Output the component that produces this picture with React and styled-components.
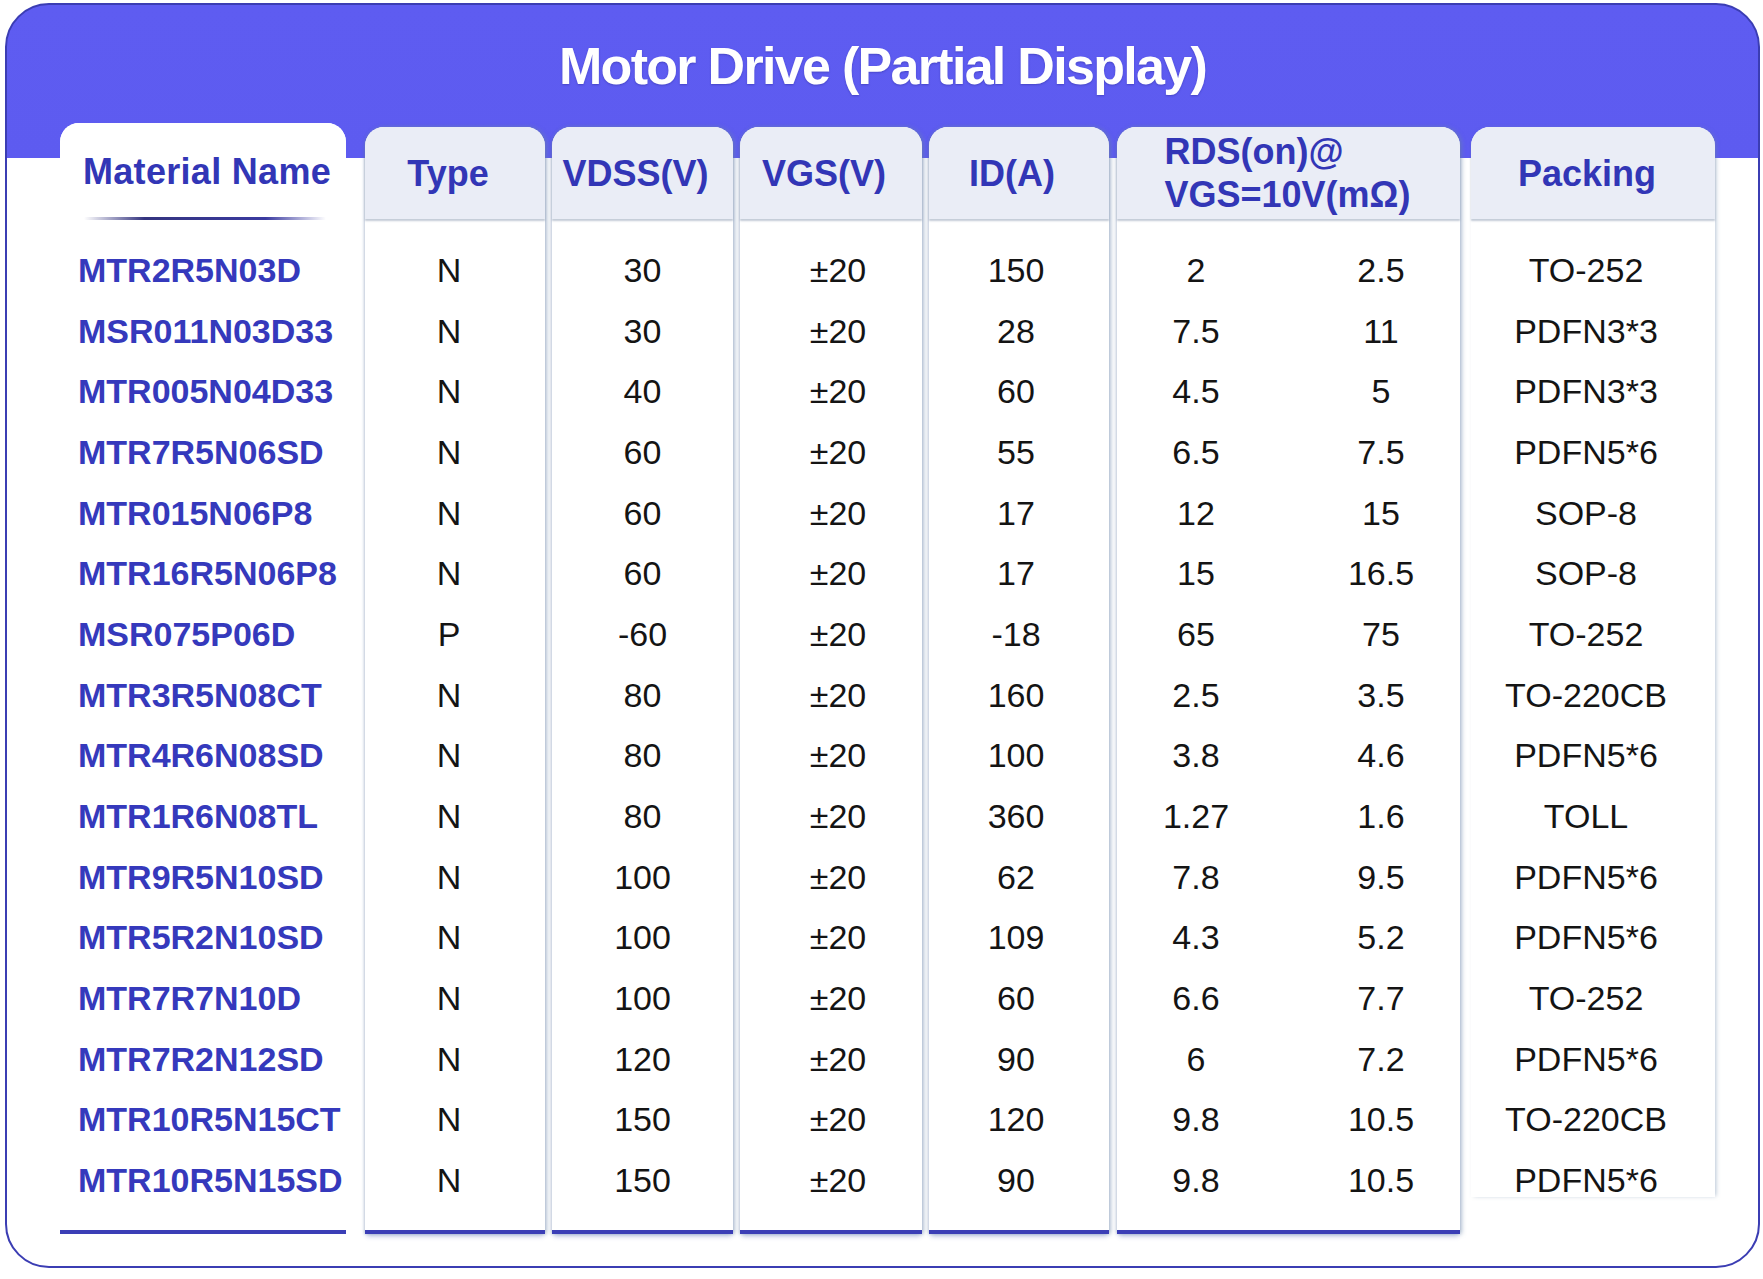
import React from 'react';
import styled, { createGlobalStyle } from 'styled-components';

const GlobalStyle = createGlobalStyle`
  html, body {
    margin: 0;
    padding: 0;
    background: #ffffff;
  }
  body {
    font-family: "Liberation Sans", Arial, sans-serif;
    -webkit-font-smoothing: antialiased;
  }
`;

const Card = styled.section`
  box-sizing: border-box;
  width: 1755px;
  height: 1265px;
  margin: 3px 0 0 5px;
  border: 2px solid #3b3db3;
  border-radius: 44px;
  overflow: hidden;
  background: linear-gradient(180deg, #5e5cf1 0, #5d5bf0 153px, #ffffff 153px);
  display: flex;
  flex-direction: column;
`;

const Title = styled.h1`
  margin: 0;
  height: 118px;
  padding-top: 4px;
  box-sizing: border-box;
  display: flex;
  align-items: center;
  justify-content: center;
  color: #ffffff;
  font-size: 52px;
  line-height: 1;
  font-weight: 700;
  letter-spacing: -1.7px;
  text-shadow: 0 1px 2px rgba(30, 30, 120, 0.35);
`;

const Columns = styled.div`
  display: flex;
  align-items: flex-start;
  padding-left: 53px;
`;

const sideShadow = '2px 0 4px rgba(110, 138, 170, 0.5), -1px 0 3px rgba(110, 138, 170, 0.32)';

const Column = styled.div`
  width: ${p => p.width}px;
  height: ${p => (p.open ? '1070px' : 'auto')};
  margin-left: ${p => p.offset}px;
  margin-top: ${p => (p.lead ? 0 : 4)}px;
  display: flex;
  flex-direction: column;
  background: #ffffff;
  border-radius: 19px 19px 0 0;
  border-bottom: ${p => (p.open ? 'none' : '4px solid #3b3eb6')};
  box-shadow: ${p =>
    p.lead
      ? 'none'
      : p.open
      ? '2px 0 4px -1px rgba(110, 138, 170, 0.5)'
      : `${sideShadow}, 0 5px 5px -2px rgba(70, 80, 190, 0.22)`};
`;

const Head = styled.div`
  position: relative;
  z-index: 1;
  flex: none;
  height: ${p => (p.lead ? 96 : 92)}px;
  box-sizing: border-box;
  display: flex;
  align-items: center;
  justify-content: ${p => (p.lead ? 'flex-start' : 'center')};
  padding: ${p => (p.lead ? '0 0 0 23px' : `0 ${p.pad}px 0 0`)};
  border-radius: 19px 19px 0 0;
  background: ${p => (p.lead ? '#ffffff' : '#eaedf6')};
  box-shadow: ${p => (p.lead ? 'none' : '0 2px 2px rgba(105, 125, 155, 0.4)')};
  color: #3236b6;
  font-size: 36px;
  font-weight: 700;
  line-height: 43px;
  letter-spacing: ${p => (p.lead ? 0.3 : 0)}px;
  text-align: left;

  ${p =>
    p.lead &&
    `&::after {
      content: '';
      position: absolute;
      left: 24px;
      right: 20px;
      bottom: -1px;
      height: 3px;
      border-radius: 2px;
      background: linear-gradient(90deg, rgba(40, 40, 120, 0), #34347f 25%, #3a3aa0 75%, rgba(40, 40, 140, 0));
    }`}
`;

const Body = styled.div`
  padding: 21px 0 ${p => (p.open ? 0 : 19)}px;
`;

const Cell = styled.div`
  height: 60.7px;
  box-sizing: border-box;
  display: grid;
  grid-template-columns: ${p => (p.split ? '1fr 1fr' : '1fr')};
  column-gap: 27px;
  align-items: center;
  justify-items: ${p => (p.lead ? 'start' : 'center')};
  padding-left: ${p => (p.lead ? 18 : Math.max(p.shift, 0) * 2)}px;
  padding-right: ${p => Math.max(-p.shift, 0) * 2}px;
  font-size: 34px;
  font-weight: ${p => (p.lead ? 700 : 400)};
  color: ${p => (p.lead ? '#3539bc' : '#141414')};
`;

const columns = [
  { title: 'Material Name', width: 286, offset: 0, shift: 0, pad: 0, lead: true },
  { title: 'Type', width: 180, offset: 19, shift: -6, pad: 14 },
  { title: 'VDSS(V)', width: 181, offset: 7, shift: 0, pad: 14 },
  { title: 'VGS(V)', width: 182, offset: 7, shift: 7, pad: 14 },
  { title: 'ID(A)', width: 180, offset: 7, shift: -3, pad: 14 },
  { title: ['RDS(on)@', 'VGS=10V(mΩ)'], width: 343, offset: 8, shift: 0, pad: 2, split: true },
  { title: 'Packing', width: 244, offset: 11, shift: -7, pad: 12, open: true },
];

const rows = [
  ['MTR2R5N03D', 'N', '30', '±20', '150', ['2', '2.5'], 'TO-252'],
  ['MSR011N03D33', 'N', '30', '±20', '28', ['7.5', '11'], 'PDFN3*3'],
  ['MTR005N04D33', 'N', '40', '±20', '60', ['4.5', '5'], 'PDFN3*3'],
  ['MTR7R5N06SD', 'N', '60', '±20', '55', ['6.5', '7.5'], 'PDFN5*6'],
  ['MTR015N06P8', 'N', '60', '±20', '17', ['12', '15'], 'SOP-8'],
  ['MTR16R5N06P8', 'N', '60', '±20', '17', ['15', '16.5'], 'SOP-8'],
  ['MSR075P06D', 'P', '-60', '±20', '-18', ['65', '75'], 'TO-252'],
  ['MTR3R5N08CT', 'N', '80', '±20', '160', ['2.5', '3.5'], 'TO-220CB'],
  ['MTR4R6N08SD', 'N', '80', '±20', '100', ['3.8', '4.6'], 'PDFN5*6'],
  ['MTR1R6N08TL', 'N', '80', '±20', '360', ['1.27', '1.6'], 'TOLL'],
  ['MTR9R5N10SD', 'N', '100', '±20', '62', ['7.8', '9.5'], 'PDFN5*6'],
  ['MTR5R2N10SD', 'N', '100', '±20', '109', ['4.3', '5.2'], 'PDFN5*6'],
  ['MTR7R7N10D', 'N', '100', '±20', '60', ['6.6', '7.7'], 'TO-252'],
  ['MTR7R2N12SD', 'N', '120', '±20', '90', ['6', '7.2'], 'PDFN5*6'],
  ['MTR10R5N15CT', 'N', '150', '±20', '120', ['9.8', '10.5'], 'TO-220CB'],
  ['MTR10R5N15SD', 'N', '150', '±20', '90', ['9.8', '10.5'], 'PDFN5*6'],
];

const App = () => (
  <>
    <GlobalStyle />
    <Card>
      <Title>Motor Drive (Partial Display)</Title>
      <Columns>
        {columns.map((col, c) => (
          <Column key={c} width={col.width} offset={col.offset} lead={col.lead} open={col.open}>
            <Head lead={col.lead} pad={col.pad}>
              {Array.isArray(col.title) ? (
                <div>
                  {col.title.map(line => (
                    <div key={line}>{line}</div>
                  ))}
                </div>
              ) : (
                col.title
              )}
            </Head>
            <Body open={col.open}>
              {rows.map((row, r) => (
                <Cell key={r} lead={col.lead} split={col.split} shift={col.shift}>
                  {col.split ? row[c].map((v, i) => <span key={i}>{v}</span>) : row[c]}
                </Cell>
              ))}
            </Body>
          </Column>
        ))}
      </Columns>
    </Card>
  </>
);

export default App;
